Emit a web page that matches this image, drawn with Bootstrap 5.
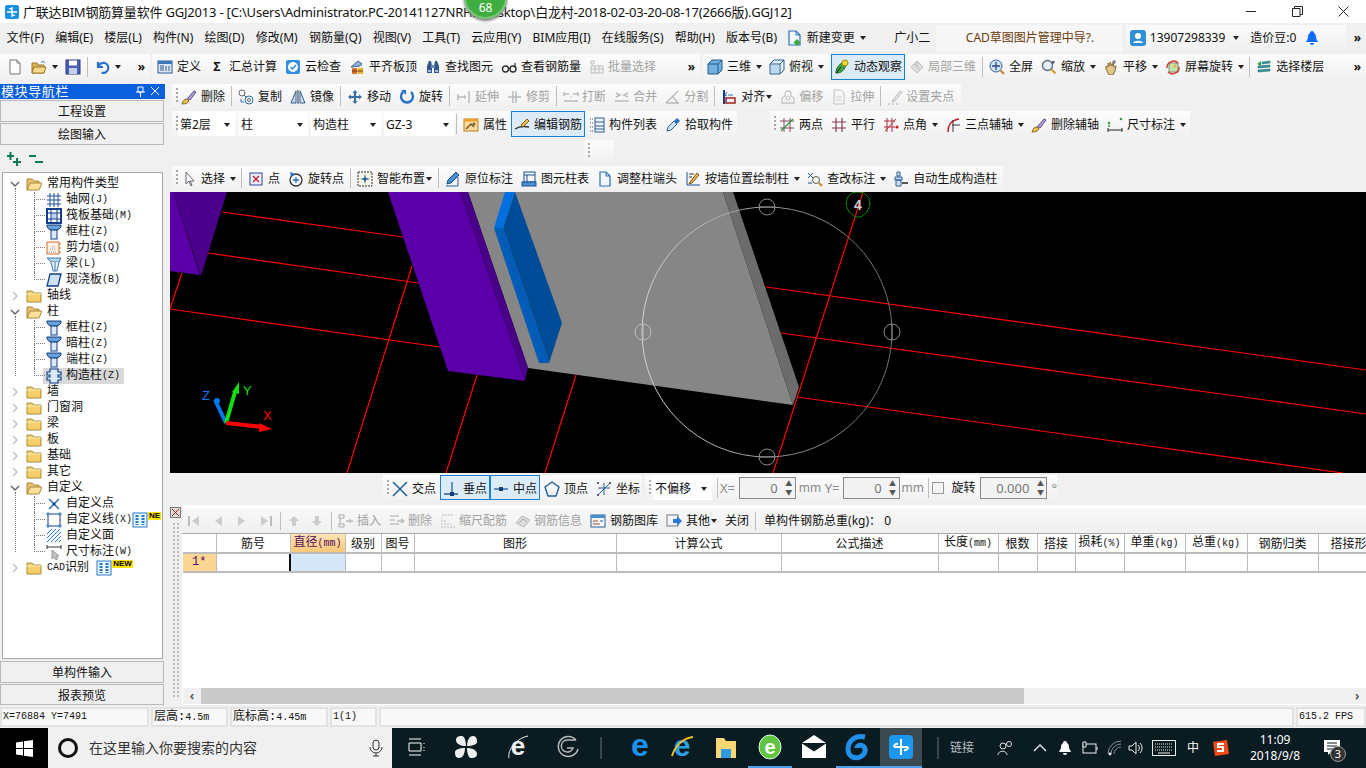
<!DOCTYPE html>
<html lang="zh-CN">
<head>
<meta charset="UTF-8">
<title>广联达BIM钢筋算量软件 GGJ2013</title>
<link href="https://cdn.jsdelivr.net/npm/bootstrap@5.3.3/dist/css/bootstrap.min.css" rel="stylesheet">
<style>
html, body { margin: 0; height: 768px; overflow: hidden; }
body { width: 1366px; background: #f0f0f0; color: #111; font: 12px/16px "Noto Sans", "Noto Sans CJK SC", sans-serif; }
.ic { width: 16px; height: 16px; flex: none; display: block; }
.lat { font-family: "Liberation Mono", monospace; font-size: 10px; }

/* title + menu */
.title-bar { height: 23px; background: #fff; padding-left: 4px; font-size: 13px; white-space: nowrap; position: relative; }
.title-bar .ic { margin-right: 3px; }
.title-txt { width: 800px; overflow: hidden; letter-spacing: -.2px; }
.win-btns { margin-left: auto; }
.win-btns span { width: 46px; display: flex; justify-content: center; }
.score-ball { position: absolute; left: 464px; top: -24px; width: 43px; height: 43px; border-radius: 50%; background: #3fae3f; border: 2px solid #79c879; box-shadow: 0 2px 3px #777; color: #fff; text-align: center; padding-top: 23px; font-size: 12px; line-height: 14px; }
.menu-bar { height: 29px; padding-top: 1px; padding-left: 1px; white-space: nowrap; }
.mn { padding: 0 5.6px; }
.mn-aide { margin-left: 20px; }
.cad-tip { width: 186px; height: 26px; background: #f7f7f7; color: #6b3b0c; padding-left: 30px; line-height: 26px; font-size: 12px; }
.user-box { height: 26px; margin-left: 4px; width: 220px; background: linear-gradient(#fafafa, #f0f0f0); padding-left: 4px; }
.more { font-weight: 700; font-size: 12px; letter-spacing: -1px; }

/* toolbars */
.tbar-row { display: flex; padding-left: 2px; }
.tblock { display: flex; align-items: center; white-space: nowrap; background: linear-gradient(#fcfcfc, #f1f1f1); }
.tbtn { display: inline-flex; align-items: center; gap: 4px; padding: 0 4px; height: 100%; }
.tbtn.off { color: #a2a2a2; gap: 3px; }
.tbtn.on { border: 1px solid #1c7fd6; background: #dcebf8; padding: 0 2px; }
.dn { width: 0; height: 0; border: 3.5px solid transparent; border-top: 4px solid #222; border-bottom: 0; margin: 0 -1px 0 1px; flex: none; }
.dn-tight { margin-left: -3px; margin-right: 0; }
.tsep { width: 1px; height: 20px; background: #bdbdbd; margin: 0 2px; flex: none; }
.grip { width: 2px; height: 16px; margin: 0 -1px 0 4px; flex: none; background: repeating-linear-gradient(#aaa 0 2px, transparent 2px 4px); }
.combo { height: 24px; background: #fff; display: flex; align-items: center; padding-left: 2px; margin-right: 3px; }
.combo .dn { margin-left: auto; margin-right: 5px; }
.w-floor { width: 57px; margin-left: 1px; margin-right: 4px; } .w-kind { width: 69px; } .w-sub { width: 70px; } .w-name { width: 70px; margin-right: 0; }
.w-off { width: 59px; margin-left: 3px; }
.row-top { height: 26px; margin-top: 2px; padding-left: 0; }
.b-a { width: 150px; padding-left: 3px; margin-right: 2px; } .b-b { width: 548px; padding-left: 1px; margin-right: 3px; } .b-c { flex: 1; }
.more-at { margin-left: auto; margin-right: 6px; }
.r2 .tbtn, .r3 .tbtn, .r5 .tbtn, .r-snap .tbtn, .r3 .combo, .r-snap .combo { padding-top: 2px; }

.work { height: 621px; margin-top: 4px; }
.nav-pane { width: 165px; margin-right: 5px; flex: none; background: #f0f0f0; }
.nav-head { height: 15px; background: #0a5fdc; color: #fff; font-size: 13px; line-height: 15px; letter-spacing: .6px; padding: 0 0 0 1px; }
.nav-tab { display: block; width: 164px; height: 22px; margin-bottom: 1px; padding: 1px 0 0; border: 1px solid #b9b9b9; border-radius: 0; background: #f0f0f0; font-size: 12px; line-height: 20px; color: #111; }
.nav-tab:first-of-type { margin-top: 1px; }
.nav-tab:last-child { height: 21px; margin-bottom: 0; }
.tree-tools { height: 26px; padding-left: 6px; gap: 6px; }
.tree-box { height: 487px; width: 161px; margin-left: 2px; margin-bottom: 2px; background: #fff; border: 1px solid #a8a8a8; padding-top: 3px; overflow: hidden; }
.tree-row { height: 16px; display: flex; align-items: center; position: relative; white-space: nowrap; font-family: "Liberation Mono", "Noto Sans CJK SC", monospace; }
.tree-top { padding-left: 6px; }
.tree-top .chev { width: 12px; height: 12px; margin-right: 5px; }
.tree-top .fld { margin-right: 5px; }
.tree-group { position: relative; }
.tree-group.open::before { content: ""; position: absolute; left: 12px; top: 12px; bottom: 8px; border-left: 1px dotted #777; }
.tree-kids { margin-left: 31px; }
.tree-kid { padding-left: 12px; }
.tree-kid::before { content: ""; position: absolute; left: 0; top: 0; width: 11px; height: 8px; border-left: 1px dotted #777; border-bottom: 1px dotted #777; }
.tree-kid::after { content: ""; position: absolute; left: 0; top: 8px; height: 8px; border-left: 1px dotted #777; }
.tree-kid:last-child::after { display: none; }
.tree-kid .ic { margin-right: 4px; }
.tree-kid .ic-flat { margin-right: 0; }
.tree-sel { background: #d9d9d9; width: 81px; display: inline-flex; align-items: center; margin-left: -3px; padding-left: 3px; height: 16px; }
.new-tag { color: #000; background: #ffe600; font: 700 8px/8px "Liberation Sans", sans-serif; padding: 0 1px; align-self: flex-start; }

.work-main { width: 1196px; }
.r2 { height: 24px; } .r3 { height: 26px; margin-top: 3px; }
.r4 { height: 21px; margin: 3px 0 0 414px; padding-left: 0; }
.r5 { height: 24px; margin-top: 5px; }
.r-snap { height: 25px; margin: 2px 0 0 213px; padding-left: 0; }
.b-r2 { width: 789px; } .b-r3a { width: 565px; } .b-r3b { width: 420px; margin-left: 33px; } .b-r4 { width: 30px; } .b-r5 { width: 831px; }
.b-s1 { width: 259px; } .b-s2 { width: 412px; margin-left: 3px; }
.canvas-3d { display: block; width: 1196px; height: 281px; margin-top: 2px; background: #000; }
.spin { height: 22px; border: 1px solid #888; background: #f3f3f3; display: flex; align-items: center; justify-content: flex-end; color: #777; font-size: 13px; }
.spin-a { width: 57px; } .spin-b { width: 68px; }
.spin i { display: block; width: 12px; margin-left: 5px; text-align: center; font-style: normal; font-size: 7px; line-height: 9px; color: #555; }
.mute { color: #8a8a8a; font-size: 13px; }
.chk-box { width: 12px; height: 12px; border: 1px solid #999; background: #f5f5f5; flex: none; }
.x-lbl { width: 19px; } .y-lbl { width: 18px; margin-left: 4px; }
.mm-a { width: 22px; margin-left: 3px; font-size: 12px; } .mm-b { width: 23px; margin-left: 2px; font-size: 12px; }
.rot-lbl { margin: 0 4px 0 8px; } .sep-s { margin: 0 3px 0 3px; }

.rebar-pane { height: 200px; margin-top: 5px; }
.side-strip { width: 12px; flex: none; padding-top: 2px; background: #f0f0f0; }
.dots { height: 175px; margin: 4px 2px 0; background-image: radial-gradient(#bbb 1px, transparent 1px); background-size: 4px 4px; }
.rebar-body { width: 1184px; background: #fff; }
.rebar-tools { height: 25px; margin-top: 3px; background: linear-gradient(#f8f8f8, #f0f0f0); white-space: nowrap; }
.rebar-tools .tbtn { height: 22px; }
.rebar-tools .tsep { height: 18px; }
.rebar-tools .nudge { padding: 0 3px; }
.tbtn-sum { margin-left: 2px; }
.rebar-grid { flex: 1; background: #fff; border-top: 1px solid #a8a8a8; padding-left: 1px; overflow: hidden; }
.grid-tbl { table-layout: fixed; width: 1183px; margin: 0; border-collapse: collapse; font-size: 12px; }
.grid-tbl th, .grid-tbl td { height: 19px; padding: 0; border: solid #bcbcbc; border-width: 0 1px 2px 0; text-align: center; font-weight: 400; line-height: 16px; white-space: nowrap; overflow: hidden; background: #fff; color: #111; }
.grid-tbl .act-h { background: linear-gradient(#fde4b5, #f8c878); color: #5a0a5a; }
.grid-tbl .act-r { background: #fbd592; color: #5a0a5a; font-family: "Liberation Mono", monospace; }
.grid-tbl .act-c { background: #d6e8f8; border-left: 2px solid #111; }
.grid-tbl .clip { text-align: left; padding-left: 12px; }
.c1{width:33px}.c2{width:74px}.c3{width:55px}.c4{width:36px}.c5{width:33px}.c6{width:202px}.c7{width:165px}.c8{width:157px}
.c9{width:60px}.c10{width:39px}.c11{width:38px}.c12{width:49px}.c13{width:61px}.c14{width:62px}.c15{width:71px}.c16{width:48px}
.hbar { height: 16px; margin: 0 0 1px 1px; background: #f0f0f0; }
.hbar-arrow { width: 18px; text-align: center; color: #555; font-weight: 700; line-height: 15px; }
.hbar-thumb { width: 823px; background: #c9c9c9; }
.hbar-end { width: 11px; margin-left: auto; color: #555; font-weight: 700; line-height: 15px; }

.status-bar { height: 20px; margin-top: 2px; gap: 2px; font-size: 12px; }
.st { background: #f8f8f8; border: 2px solid #e2e2e2; line-height: 16px; padding-left: 1px; white-space: nowrap; font-family: "Liberation Mono", "Noto Sans CJK SC", monospace; overflow: hidden; }
.st-xy { width: 149px; } .st-h { width: 77px; } .st-b { width: 98px; } .st-n { width: 47px; } .st-fill { flex: 1; } .st-fps { width: 70px; }
.st-sm { font-size: 10px; }

.task-bar { height: 40px; margin-top: 1px; background: #0a1b22; color: #fff; position: relative; white-space: nowrap; }
.start-cell { width: 48px; height: 40px; background: #000; justify-content: center; }
.search-cell { width: 344px; height: 40px; background: #f0f0f0; color: #333; font-size: 14px; padding-left: 9px; gap: 10px; }
.task-ic { width: 44px; height: 40px; display: flex; align-items: center; justify-content: center; border-bottom: 2px solid transparent; flex: none; }
.task-ic svg { width: 26px; height: 26px; display: block; overflow: visible; }
.task-ic.used { border-bottom-color: #4aa3e8; }
.task-ic.now { background: #3b4a51; border-bottom-color: #4aa3e8; width: 42px; }
.task-sep { width: 2px; height: 22px; background: #3a474d; flex: none; }
.tray { font-size: 12px; }
.tray-link { color: #b8c0c4; }
.clock { text-align: center; width: 70px; line-height: 16px; }
.note-badge { left: 7px; top: 8px; width: 16px; height: 16px; background: #333; border: 1px solid #999; font-size: 11px; line-height: 14px; }
.note-wrap { margin-left: auto; margin-right: 23px; }
.ml-n2 { margin-left: -2px; } .ml2 { margin-left: 2px; } .ml5 { margin-left: 5px; } .ml6 { margin-left: 6px; } .ml7 { margin-left: 7px; } .ml8 { margin-left: 8px; }
.ml9 { margin-left: 9px; } .ml10 { margin-left: 10px; } .ml11 { margin-left: 11px; } .ml12 { margin-left: 12px; } .ml15 { margin-left: 15px; } .ml16 { margin-left: 16px; } .ml20 { margin-left: 20px; } .ml23 { margin-left: 23px; }
</style>
</head>
<body>

<!-- icons -->
<svg width="0" height="0" class="position-absolute">
<defs>
<symbol id="i-app" viewBox="0 0 16 16"><rect x="1" y="1" width="14" height="14" rx="2" fill="#1b8fe0"/><path d="M8 3v10M3 8h10M5 5a2 2 0 0 1 3 1M11 11a2 2 0 0 1-3-1" stroke="#fff" stroke-width="1.3" fill="none"/></symbol>
<symbol id="i-new" viewBox="0 0 16 16"><path d="M3 1h7l3 3v11H3z" fill="#fff" stroke="#777"/><path d="M10 1v3h3" fill="#ddd" stroke="#777"/></symbol>
<symbol id="i-open" viewBox="0 0 16 16"><path d="M1 4h5l1 2h6v8H1z" fill="#e0b25a" stroke="#9a7a30"/><path d="M3 8h12l-2 6H1z" fill="#f8d88a" stroke="#9a7a30"/><path d="M10 3a3 3 0 0 1 4 1" stroke="#3a7ad0" fill="none"/></symbol>
<symbol id="i-save" viewBox="0 0 16 16"><rect x="1" y="1" width="14" height="14" fill="#4a5fb5" stroke="#2a3a80"/><rect x="4" y="1.500" width="8" height="5" fill="#fff"/><rect x="4" y="9" width="8" height="6" fill="#c8d0e8"/></symbol>
<symbol id="i-undo" viewBox="0 0 16 16"><path d="M4 3v5h5M4.500 7.500a5 5 0 1 1 3 6" fill="none" stroke="#2a70c8" stroke-width="2.200"/></symbol>
<symbol id="i-chg" viewBox="0 0 16 16"><path d="M2 1h7l4 4v10H2z" fill="#f2f7fc" stroke="#2a70b8" stroke-width="1.200"/><path d="M9 1v4h4" fill="none" stroke="#2a70b8"/><path d="M10 9l3.500 3.500L10 16l-3.500-3.500z" fill="#3fa53f"/></symbol>
<symbol id="i-def" viewBox="0 0 16 16"><rect x="1" y="2" width="14" height="12" fill="#dce8f5" stroke="#2a5a95"/><rect x="1" y="2" width="14" height="3" fill="#3a78b8"/><path d="M3 7h4M3 9h4M3 11h4M9 7v5M12 7v5" stroke="#2a5a95"/></symbol>
<symbol id="i-cloud" viewBox="0 0 16 16"><rect x="1" y="1" width="14" height="14" rx="2" fill="#2f8fe0"/><circle cx="8" cy="8" r="5" fill="#fff"/><path d="M5.500 8l2 2 3.500-4" stroke="#2f8fe0" stroke-width="1.500" fill="none"/></symbol>
<symbol id="i-flush" viewBox="0 0 16 16"><path d="M2 8l7-6 4 3-2 2z" fill="#8fb4da" stroke="#40688f"/><rect x="3" y="9" width="5" height="6" fill="#d9702a"/><rect x="9" y="9" width="5" height="6" fill="#e8b52a"/><path d="M3 12h11" stroke="#7a3a10"/></symbol>
<symbol id="i-binoc" viewBox="0 0 16 16"><path d="M2 14V7l2-5h2l1 5v7zM9 14V7l1-5h2l2 5v7z" fill="#33578a"/><rect x="6" y="6" width="4" height="3" fill="#6a8ab5"/><rect x="3" y="11" width="3" height="2" fill="#a8c0e0"/><rect x="10" y="11" width="3" height="2" fill="#a8c0e0"/></symbol>
<symbol id="i-glass" viewBox="0 0 16 16"><circle cx="4.500" cy="10" r="3" fill="none" stroke="#333" stroke-width="1.400"/><circle cx="12" cy="10" r="3" fill="none" stroke="#333" stroke-width="1.400"/><path d="M7 9.500h2.500M14 9V4" stroke="#333" stroke-width="1.200"/></symbol>
<symbol id="i-batch" viewBox="0 0 16 16"><path d="M2 2h3v3H2zM2 7h12v7H2zM6 7v7M10 7v7M2 10h12" fill="none" stroke="#bbb"/></symbol>
<symbol id="i-cube" viewBox="0 0 16 16"><path d="M1 5l4-4h10v10l-4 4H1z" fill="#6fb0df" stroke="#235a8a"/><path d="M1 5h10v10M11 5l4-4" fill="none" stroke="#235a8a"/></symbol>
<symbol id="i-top" viewBox="0 0 16 16"><path d="M1 5l4-4h10v10l-4 4H1z" fill="#e6f1fa" stroke="#235a8a"/><path d="M1 5h10v10M11 5l4-4" fill="none" stroke="#235a8a"/><path d="M5 1l-4 4" stroke="#235a8a"/><path d="M2 6h8v8H2z" fill="#bcd9f0"/></symbol>
<symbol id="i-orbit" viewBox="0 0 16 16"><path d="M2 14c0-6 4-10 11-12-1 7-4 11-9 12z" fill="#3fa53f" stroke="#1d6b1d"/><circle cx="11" cy="4" r="3" fill="#f2da3a" stroke="#9a8a10"/><path d="M2 14l5-6" stroke="#114"/></symbol>
<symbol id="i-local" viewBox="0 0 16 16"><path d="M2 8l6-6 6 6-6 6z" fill="#dedede" stroke="#bbb"/><path d="M5 5l6 6M8 2v6" stroke="#bbb"/></symbol>
<symbol id="i-full" viewBox="0 0 16 16"><circle cx="7" cy="7" r="6" fill="#cfe2f5" stroke="#3a5f95"/><path d="M7 3v8M3 7h8" stroke="#2a4a80" stroke-width="1.300"/><path d="M11.500 11.500L15 15" stroke="#c08a30" stroke-width="2"/></symbol>
<symbol id="i-zoom" viewBox="0 0 16 16"><circle cx="6.500" cy="6.500" r="5" fill="#e6eef8" stroke="#5a6a80" stroke-width="1.300"/><path d="M10.500 10.500l4 4" stroke="#d09a30" stroke-width="2.200"/><path d="M12 2v3M11 3h3" stroke="#335"/></symbol>
<symbol id="i-pan" viewBox="0 0 16 16"><path d="M3 10V7l2 1V4l2 3V3l2 4 1-3 1 4 2-1-1 5-2 4H6z" fill="#e3c48a" stroke="#8a6a30"/><path d="M11 1v4M9 3h4" stroke="#556"/></symbol>
<symbol id="i-spin" viewBox="0 0 16 16"><rect x="4" y="4" width="9" height="9" fill="#bfe3a8" stroke="#888"/><path d="M2 9a6.500 6.500 0 0 1 11-5M14 8a6.500 6.500 0 0 1-11 5" fill="none" stroke="#d8332a" stroke-width="1.400"/><circle cx="10" cy="7" r="1.500" fill="#e8b52a"/></symbol>
<symbol id="i-floor" viewBox="0 0 16 16"><path d="M6 3l8-1v2l-8 1zM2 7l12-1v2L2 9zM2 11l12-1v2l-12 1z" fill="#2f8fae" stroke="#1f6a50" stroke-width=".5"/><path d="M5 2L1 5l4 2z" fill="#2fa04a"/></symbol>
<symbol id="i-del" viewBox="0 0 16 16"><path d="M1 15c1-3 2-5 5-5l2 2c-1 2-3 3-7 3z" fill="#e8c24a" stroke="#8a6a20"/><path d="M6.500 9.500L13 2l2 1-6 8z" fill="#b7a5d8" stroke="#5a4a88"/></symbol>
<symbol id="i-copy" viewBox="0 0 16 16"><circle cx="4" cy="4" r="3" fill="none" stroke="#666"/><circle cx="11" cy="11" r="4" fill="none" stroke="#2a70b8"/><path d="M6 6l3 3M3 10v3h3" stroke="#2a70b8" fill="none"/><circle cx="11" cy="11" r="1.500" fill="none" stroke="#666"/></symbol>
<symbol id="i-mirror" viewBox="0 0 16 16"><path d="M6 2L1 14h5zM10 2l5 12h-5z" fill="#cfe0f2" stroke="#2f5f95"/><path d="M8 1v14" stroke="#333"/></symbol>
<symbol id="i-move" viewBox="0 0 16 16"><path d="M8 1l2.500 3H9v3h3V5.500L15 8l-3 2.500V9H9v3h1.500L8 15l-2.500-3H7V9H4v1.500L1 8l3-2.500V7h3V4H5.500z" fill="#3a6fa5"/></symbol>
<symbol id="i-rot" viewBox="0 0 16 16"><path d="M4 3a6 6 0 1 0 8 0" fill="none" stroke="#2a6fc8" stroke-width="2.400"/><path d="M2 1h5v5z" fill="#2a6fc8"/></symbol>
<symbol id="i-ext" viewBox="0 0 16 16"><path d="M1 8h9M13 2v12M2 5v6" fill="none" stroke="#bbb" stroke-width="1.500"/><path d="M8 6l2 2-2 2" stroke="#bbb" fill="none"/></symbol>
<symbol id="i-trim" viewBox="0 0 16 16"><path d="M1 8h13M6 2v12M9 2v12" fill="none" stroke="#bbb" stroke-width="1.500"/></symbol>
<symbol id="i-brk" viewBox="0 0 16 16"><path d="M1 5h5M10 5h5M1 12h14M1 3v4M15 3v4" fill="none" stroke="#bbb" stroke-width="1.500"/><path d="M7 8h2" stroke="#ccc"/></symbol>
<symbol id="i-mrg" viewBox="0 0 16 16"><path d="M2 4l4 2-4 2M14 4l-4 2 4 2M1 12h14" fill="none" stroke="#bbb" stroke-width="1.500"/></symbol>
<symbol id="i-split" viewBox="0 0 16 16"><path d="M1 14L13 2M1 14h13M8 8l5 6" fill="none" stroke="#bbb" stroke-width="1.400"/></symbol>
<symbol id="i-align" viewBox="0 0 16 16"><path d="M3 1v14" stroke="#1b3a8a" stroke-width="2"/><rect x="5" y="9" width="9" height="5" fill="none" stroke="#a02020" stroke-width="1.500"/><path d="M7 6h5M6 3l-2 3 2 1" stroke="#2a70b8" fill="none"/></symbol>
<symbol id="i-off" viewBox="0 0 16 16"><path d="M2 14V9l3-2V5a3 3 0 0 1 6 0v2l3 2v5z" fill="none" stroke="#c4c4c4" stroke-width="1.300"/><circle cx="8" cy="9" r="2" fill="none" stroke="#c4c4c4"/></symbol>
<symbol id="i-str" viewBox="0 0 16 16"><path d="M3 1h7l3 3v11H3z" fill="#f6f6f6" stroke="#c0c0c0"/><path d="M5 8h6M5 11h6" stroke="#ccc"/></symbol>
<symbol id="i-grp" viewBox="0 0 16 16"><path d="M6 11l7-9 2 1-7 9-3 1z" fill="#e6e6e6" stroke="#bbb"/><path d="M1 15h2M5 15h2M9 15h2" stroke="#aaa"/></symbol>
<symbol id="i-prop" viewBox="0 0 16 16"><rect x="1" y="2" width="14" height="12" fill="#f9d9a0" stroke="#b87a20"/><rect x="1" y="2" width="14" height="2.500" fill="#f0a030"/><path d="M3 12l5-5 3 3" stroke="#7a5a20" fill="none" stroke-width="1.500"/><circle cx="11" cy="7" r="1.500" fill="#7a5a20"/></symbol>
<symbol id="i-edit" viewBox="0 0 16 16"><path d="M1 12c3-2 8-3 14-2" stroke="#333" stroke-width="1.500" fill="none"/><path d="M7 8l6-6 2 2-6 6z" fill="#e8c24a" stroke="#7a5a20"/></symbol>
<symbol id="i-list" viewBox="0 0 16 16"><rect x="6" y="1" width="9" height="14" fill="#eef4fa" stroke="#2f5f95"/><path d="M6 5h9M6 9h9M6 12h9" stroke="#2f5f95"/><path d="M1 2h3M1 6h3M1 10h3M1 14h3" stroke="#555" stroke-dasharray="1 1"/></symbol>
<symbol id="i-pick" viewBox="0 0 16 16"><path d="M2 14l1-4 6-6 3 3-6 6z" fill="#cfe2f5" stroke="#2a5f95"/><path d="M9 4l3-3 3 3-3 3z" fill="#2a70c8"/></symbol>
<symbol id="i-p2" viewBox="0 0 16 16"><path d="M1 4h14M1 11h14M5 1v14M11 1v14" stroke="#8a4a5a"/><path d="M2 14L14 2" stroke="#2a9a3a" stroke-width="1.300"/></symbol>
<symbol id="i-par" viewBox="0 0 16 16"><path d="M1 5h14M1 11h14M5 1v14M11 1v14" stroke="#8a3a5a" stroke-width="1.200"/></symbol>
<symbol id="i-ang" viewBox="0 0 16 16"><path d="M1 4h11M1 10h11M4 1v14M9 1v14M2 14L13 2" stroke="#b03040"/><circle cx="14" cy="10" r="1.600" fill="#d01a2a"/></symbol>
<symbol id="i-p3" viewBox="0 0 16 16"><path d="M3 15C3 7 7 3 14 2" fill="none" stroke="#d01a2a" stroke-width="1.400"/><path d="M7 8h8M8 3v12" stroke="#334"/></symbol>
<symbol id="i-dim" viewBox="0 0 16 16"><path d="M1 13h14M1 11v4M15 11v4" stroke="#222"/><circle cx="2" cy="6" r="1.300" fill="#3a9a4a"/><circle cx="14" cy="2" r="1.300" fill="#3a9a4a"/><circle cx="2" cy="9" r="1" fill="#3a9a4a"/></symbol>
<symbol id="i-cur" viewBox="0 0 16 16"><path d="M5 1v12l3-3 2 5 1-1-2-4h4z" fill="#fff" stroke="#667"/></symbol>
<symbol id="i-pt" viewBox="0 0 16 16"><rect x="2" y="2" width="12" height="12" fill="#eef" stroke="#2a4a88"/><path d="M5 5l6 6M11 5l-6 6" stroke="#c02030" stroke-width="1.400"/></symbol>
<symbol id="i-rpt" viewBox="0 0 16 16"><circle cx="8" cy="9" r="6" fill="none" stroke="#333" stroke-width="1.300"/><path d="M8 6v6M5 9h6" stroke="#2a70b8" stroke-width="1.300"/><path d="M2 1l1 5 4-3z" fill="#2a70c8"/></symbol>
<symbol id="i-smart" viewBox="0 0 16 16"><rect x="1" y="1" width="14" height="14" fill="#f4f4e4" stroke="#333" stroke-dasharray="2 1"/><path d="M8 3l1 4 4 1-4 1-1 4-1-4-4-1 4-1z" fill="#2a5f95"/></symbol>
<symbol id="i-orig" viewBox="0 0 16 16"><path d="M1 15h12V6" fill="none" stroke="#2a5f95"/><path d="M2 13l1-4 8-8 3 3-8 8z" fill="#4a8fd0" stroke="#1d4f85"/></symbol>
<symbol id="i-tbl" viewBox="0 0 16 16"><rect x="3" y="1" width="11" height="10" fill="#f4f8fc" stroke="#1d4f95"/><path d="M3 4h11M6 4v7" stroke="#1d4f95"/><rect x="1" y="11" width="14" height="4" fill="#4a8fd0" stroke="#1d4f95"/></symbol>
<symbol id="i-adj" viewBox="0 0 16 16"><path d="M3 1h6l4 4v10H3z" fill="#f2f7fc" stroke="#2a70b8" stroke-width="1.200"/><path d="M9 1v4h4" fill="none" stroke="#2a70b8"/></symbol>
<symbol id="i-wall" viewBox="0 0 16 16"><path d="M2 1v13h13" stroke="#1d4f95" fill="none"/><path d="M5 11l7-9 2 2-7 8-3 1z" fill="#e6b04a" stroke="#7a5a20"/><path d="M4 3h5M4 6h3" stroke="#333"/></symbol>
<symbol id="i-chk" viewBox="0 0 16 16"><path d="M1 2l5 5M6 2L1 7M1 12h4" stroke="#1d4f95"/><circle cx="9" cy="9" r="3.500" fill="#f6f6e4" stroke="#5a5a5a"/><path d="M12 12l3 3" stroke="#c8862a" stroke-width="2"/></symbol>
<symbol id="i-auto" viewBox="0 0 16 16"><path d="M4 1h3v4H4zM2 6h7v3H2zM3 9h5v6H3z" fill="#cfe2f5" stroke="#2a5f95"/><path d="M9 12h6" stroke="#555" stroke-width="2"/></symbol>
<symbol id="i-sx" viewBox="0 0 16 16"><path d="M1 1l14 14M15 1L1 15" stroke="#1d5f9f" stroke-width="1.500"/></symbol>
<symbol id="i-sp" viewBox="0 0 16 16"><path d="M9 1v12M1 13h14" stroke="#1d5f9f" stroke-width="1.300"/><rect x="7" y="11" width="4" height="4" fill="#1b3a78"/></symbol>
<symbol id="i-sm" viewBox="0 0 16 16"><path d="M1 8h14" stroke="#1d5f9f" stroke-width="1.300"/><rect x="6" y="6" width="4" height="4" fill="#1b3a78"/></symbol>
<symbol id="i-sv" viewBox="0 0 16 16"><path d="M8 1l7 5-3 9H4L1 6z" fill="none" stroke="#1d5f9f" stroke-width="1.400"/></symbol>
<symbol id="i-sc" viewBox="0 0 16 16"><path d="M2 7h12M8 2v12M2 14L14 2" stroke="#1d5f9f" fill="none"/><circle cx="2" cy="2" r="1" fill="#334"/><circle cx="14" cy="2" r="1" fill="#334"/><circle cx="2" cy="14" r="1" fill="#334"/></symbol>
<symbol id="i-ins" viewBox="0 0 16 16"><path d="M1 2h5v3H1zM1 11h5v3H1zM2 5v6" fill="none" stroke="#aaa"/><path d="M8 8h7M12 6v4" stroke="#bbb" stroke-width="1.300"/></symbol>
<symbol id="i-rem" viewBox="0 0 16 16"><path d="M1 3h9M1 7h5M1 11h9" stroke="#aaa"/><path d="M8 8h7M12 6l3 2-3 2" fill="none" stroke="#bbb" stroke-width="1.300"/></symbol>
<symbol id="i-scale" viewBox="0 0 16 16"><path d="M2 15V5M5 15V7M8 15V9M11 15v-4M14 15v-2M2 2h12" stroke="#bbb" stroke-dasharray="2 1"/></symbol>
<symbol id="i-info" viewBox="0 0 16 16"><path d="M1 10l6-7 8 4-6 7z" fill="#ddd" stroke="#bbb"/><path d="M4 10l4-4 4 3" stroke="#aaa" fill="none"/></symbol>
<symbol id="i-lib" viewBox="0 0 16 16"><rect x="1" y="2" width="14" height="12" fill="#f3f7fb" stroke="#2a5f95"/><rect x="1" y="2" width="14" height="3" fill="#4a8fd0"/><path d="M3 8h5M3 11h7" stroke="#a05020"/><path d="M10 8h3" stroke="#2a5f95"/></symbol>
<symbol id="i-oth" viewBox="0 0 16 16"><rect x="1" y="2" width="11" height="11" fill="#f2f6fa" stroke="#778"/><path d="M7 6h4V3l5 5-5 5v-3H7z" fill="#2a78d8"/></symbol>
<symbol id="i-plus2" viewBox="0 0 16 16"><path d="M1 5h7M4.500 1v8M7 11h8M11 7v8" stroke="#0a7a58" stroke-width="2"/></symbol>
<symbol id="i-min2" viewBox="0 0 16 16"><path d="M1 5h7M7 11h8" stroke="#0a7a58" stroke-width="2"/></symbol>
<symbol id="i-chv" viewBox="0 0 12 12"><path d="M2 4l4 4 4-4" fill="none" stroke="#666" stroke-width="1.500"/></symbol>
<symbol id="i-chr" viewBox="0 0 12 12"><path d="M4 2l4 4-4 4" fill="none" stroke="#c0c0c0" stroke-width="1.500"/></symbol>
<symbol id="i-fd" viewBox="0 0 16 16"><path d="M1 3h5l2 2h7v9H1z" fill="#f7cf6a" stroke="#aa8a3a"/><path d="M1 6h14" stroke="#fff3c0"/></symbol>
<symbol id="i-fo" viewBox="0 0 16 16"><path d="M1 3h5l2 2h5v3H4l-3 6z" fill="#e6c070" stroke="#aa8a3a"/><path d="M4 7h12l-3 7H1z" fill="#fbe09a" stroke="#aa8a3a"/></symbol>
<symbol id="i-tgrid" viewBox="0 0 16 16"><path d="M1 4h14M1 8h14M1 12h14M4 1v14M8 1v14M12 1v14" stroke="#1d4fa5"/></symbol>
<symbol id="i-traft" viewBox="0 0 16 16"><rect x="1" y="1" width="14" height="14" fill="#fff" stroke="#123f88" stroke-width="2"/><rect x="5" y="5" width="6" height="6" fill="#bcd4f0" stroke="#123f88"/><path d="M1 5h4M1 11h4M11 5h4M11 11h4M5 1v4M11 1v4M5 11v4M11 11v4" stroke="#123f88"/></symbol>
<symbol id="i-tcol" viewBox="0 0 16 16"><path d="M1 1h14v2l-3 3H4L1 3z" fill="#6a9fd8" stroke="#123f88"/><rect x="5" y="6" width="6" height="9" fill="#dce9f8" stroke="#123f88"/></symbol>
<symbol id="i-twall" viewBox="0 0 16 16"><rect x="1" y="2" width="12" height="12" fill="#f8f0e6" stroke="#d0702a"/><path d="M3 12h8M4 9h6M6 7h3" stroke="#999" stroke-dasharray="1 1"/><path d="M13 4h2M13 8h2M13 12h2" stroke="#d0702a"/></symbol>
<symbol id="i-tbeam" viewBox="0 0 16 16"><path d="M1 2h14l-2 4H5z" fill="#b9d4ee" stroke="#3a78b8"/><path d="M5 6l2 9h4l2-9" fill="#e6f1fa" stroke="#3a78b8"/><path d="M9 6v9" stroke="#3a78b8"/></symbol>
<symbol id="i-tslab" viewBox="0 0 16 16"><path d="M4 2h11l-3 12H1z" fill="#cfe2f5" stroke="#123f88" stroke-width="1.300"/></symbol>
<symbol id="i-tcc" viewBox="0 0 16 16"><path d="M4 1h8v3h3v3h-3v2h3v3h-3v3H4v-3H1V9h3V7H1V4h3z" fill="#dce9f8" stroke="#123f88" stroke-width="1.200"/></symbol>
<symbol id="i-tpt" viewBox="0 0 16 16"><path d="M3 3l10 10M13 3L3 13" stroke="#2a70b8" stroke-width="1.500"/><circle cx="8" cy="8" r="1.500" fill="#123f88"/></symbol>
<symbol id="i-tln" viewBox="0 0 16 16"><rect x="2" y="2" width="12" height="12" fill="none" stroke="#123f88"/><path d="M1 1h2v2H1zM13 1h2v2h-2zM1 13h2v2H1zM13 13h2v2h-2z" fill="#fff" stroke="#2a70b8"/></symbol>
<symbol id="i-tfc" viewBox="0 0 16 16"><path d="M1 6l5-5M1 10l9-9M1 14L14 1M5 14l10-10M9 14l6-6M13 14l2-2" stroke="#2a78d8"/></symbol>
<symbol id="i-tdm" viewBox="0 0 16 16"><path d="M1 3h14M1 1v4M15 1v4" stroke="#333"/><path d="M6 6v9l2-2 2 3 2-1-2-3h3z" fill="#c4c4c4" stroke="#999"/></symbol>
<symbol id="i-cols" viewBox="0 0 16 16"><rect x="1" y="1" width="14" height="14" fill="#eaf4fd" stroke="#2a78c8"/><path d="M5 3v10M11 3v10" stroke="#2a78c8" stroke-width="3" stroke-dasharray="2 1"/></symbol>
<symbol id="i-bell" viewBox="0 0 16 16"><path d="M8 1a2 2 0 0 1 2 2c2 1 2 3 2 5l2 4H2l2-4c0-2 0-4 2-5a2 2 0 0 1 2-2zM6 13h4a2 2 0 0 1-4 0z" fill="currentColor"/></symbol>
</defs>
</svg>

<!-- title bar -->
<div class="title-bar d-flex align-items-center">
  <svg class="ic"><use href="#i-app"/></svg>
  <div class="title-txt">广联达BIM钢筋算量软件 GGJ2013 - [C:\Users\Administrator.PC-20141127NRHI\Desktop\白龙村-2018-02-03-20-08-17(2666版).GGJ12]</div>
  <div class="win-btns d-flex align-items-center">
    <span><svg width="11" height="11"><path d="M0 5.500h10" stroke="#222"/></svg></span>
    <span><svg width="11" height="11"><path d="M.5 2.500h7.500v8H.5zM2.500 2.500v-2h8v8H8" fill="none" stroke="#222"/></svg></span>
    <span><svg width="11" height="11"><path d="M.5.500l10 10M10.500.500l-10 10" stroke="#222"/></svg></span>
  </div>
  <div class="score-ball">68</div>
</div>

<!-- menu -->
<div class="menu-bar d-flex align-items-center">
  <span class="mn">文件(F)</span><span class="mn">编辑(E)</span><span class="mn">楼层(L)</span><span class="mn">构件(N)</span><span class="mn">绘图(D)</span><span class="mn">修改(M)</span><span class="mn">钢筋量(Q)</span><span class="mn">视图(V)</span><span class="mn">工具(T)</span><span class="mn">云应用(Y)</span><span class="mn">BIM应用(I)</span><span class="mn">在线服务(S)</span><span class="mn">帮助(H)</span><span class="mn">版本号(B)</span>
  <span class="tbtn"><svg class="ic"><use href="#i-chg"/></svg>新建变更<i class="dn"></i></span>
  <span class="mn mn-aide">广小二</span>
  <div class="cad-tip">CAD草图图片管理中导?.</div>
  <div class="user-box d-flex align-items-center">
    <svg class="ic"><rect x="0" y="0" width="16" height="16" rx="3" fill="#2f8fd8"/><circle cx="8" cy="6" r="3" fill="#fff"/><path d="M3 13c1-3 9-3 10 0z" fill="#fff"/></svg>
    <span class="ms-1">13907298339</span><i class="dn ms-2"></i><span class="ms-2 ps-1">造价豆:0</span>
    <svg class="ic text-primary ms-2"><use href="#i-bell"/></svg>
  </div>
  <span class="more more-at">»</span>
</div>

<!-- top toolbar -->
<div class="tbar-row row-top">
  <div class="tblock b-a">
    <span class="tbtn"><svg class="ic"><use href="#i-new"/></svg></span>
    <span class="tbtn"><svg class="ic"><use href="#i-open"/></svg><i class="dn"></i></span>
    <span class="tbtn"><svg class="ic"><use href="#i-save"/></svg></span>
    <i class="tsep"></i>
    <span class="tbtn"><svg class="ic"><use href="#i-undo"/></svg><i class="dn"></i></span>
    <span class="more more-at">»</span>
  </div>
  <div class="tblock b-b">
    <span class="tbtn"><svg class="ic"><use href="#i-def"/></svg>定义</span>
    <span class="tbtn"><b class="ic text-center">Σ</b>汇总计算</span>
    <span class="tbtn"><svg class="ic"><use href="#i-cloud"/></svg>云检查</span>
    <span class="tbtn"><svg class="ic"><use href="#i-flush"/></svg>平齐板顶</span>
    <span class="tbtn"><svg class="ic"><use href="#i-binoc"/></svg>查找图元</span>
    <span class="tbtn"><svg class="ic"><use href="#i-glass"/></svg>查看钢筋量</span>
    <span class="tbtn off"><svg class="ic"><use href="#i-batch"/></svg>批量选择</span>
    <span class="more more-at">»</span>
  </div>
  <div class="tblock b-c">
    <span class="tbtn"><svg class="ic"><use href="#i-cube"/></svg>三维<i class="dn"></i></span>
    <span class="tbtn"><svg class="ic"><use href="#i-top"/></svg>俯视<i class="dn"></i></span>
    <span class="tbtn on ms-1"><svg class="ic"><use href="#i-orbit"/></svg>动态观察</span>
    <span class="tbtn off"><svg class="ic"><use href="#i-local"/></svg>局部三维</span>
    <i class="tsep"></i>
    <span class="tbtn"><svg class="ic"><use href="#i-full"/></svg>全屏</span>
    <span class="tbtn"><svg class="ic"><use href="#i-zoom"/></svg>缩放<i class="dn"></i></span>
    <span class="tbtn"><svg class="ic"><use href="#i-pan"/></svg>平移<i class="dn"></i></span>
    <span class="tbtn"><svg class="ic"><use href="#i-spin"/></svg>屏幕旋转<i class="dn"></i></span>
    <i class="tsep"></i>
    <span class="tbtn"><svg class="ic"><use href="#i-floor"/></svg>选择楼层</span>
    <span class="more more-at">»</span>
  </div>
</div>

<div class="work d-flex">
  <!-- module nav -->
  <div class="nav-pane">
    <div class="nav-head d-flex align-items-center">模块导航栏
      <svg class="ms-auto" width="11" height="11"><path d="M3 1h5v5H3zM1 6h9M5.500 6v5" fill="none" stroke="#fff"/></svg>
      <svg class="mx-1" width="11" height="11"><path d="M1 1l8 8M9 1l-8 8" stroke="#fff"/></svg>
    </div>
    <button class="btn nav-tab" type="button">工程设置</button>
    <button class="btn nav-tab" type="button">绘图输入</button>
    <div class="tree-tools d-flex align-items-center">
      <svg class="ic"><use href="#i-plus2"/></svg><svg class="ic"><use href="#i-min2"/></svg>
    </div>
    <div class="tree-box">
      <div class="tree-group open">
        <div class="tree-row tree-top"><svg class="ic chev"><use href="#i-chv"/></svg><svg class="ic fld"><use href="#i-fo"/></svg>常用构件类型</div>
        <div class="tree-kids">
          <div class="tree-row tree-kid"><svg class="ic"><use href="#i-tgrid"/></svg>轴网<span class="lat">(J)</span></div>
          <div class="tree-row tree-kid"><svg class="ic"><use href="#i-traft"/></svg>筏板基础<span class="lat">(M)</span></div>
          <div class="tree-row tree-kid"><svg class="ic"><use href="#i-tcol"/></svg>框柱<span class="lat">(Z)</span></div>
          <div class="tree-row tree-kid"><svg class="ic"><use href="#i-twall"/></svg>剪力墙<span class="lat">(Q)</span></div>
          <div class="tree-row tree-kid"><svg class="ic"><use href="#i-tbeam"/></svg>梁<span class="lat">(L)</span></div>
          <div class="tree-row tree-kid"><svg class="ic"><use href="#i-tslab"/></svg>现浇板<span class="lat">(B)</span></div>
        </div>
      </div>
      <div class="tree-row tree-top"><svg class="ic chev"><use href="#i-chr"/></svg><svg class="ic fld"><use href="#i-fd"/></svg>轴线</div>
      <div class="tree-group open">
        <div class="tree-row tree-top"><svg class="ic chev"><use href="#i-chv"/></svg><svg class="ic fld"><use href="#i-fo"/></svg>柱</div>
        <div class="tree-kids">
          <div class="tree-row tree-kid"><svg class="ic"><use href="#i-tcol"/></svg>框柱<span class="lat">(Z)</span></div>
          <div class="tree-row tree-kid"><svg class="ic"><use href="#i-tcol"/></svg>暗柱<span class="lat">(Z)</span></div>
          <div class="tree-row tree-kid"><svg class="ic"><use href="#i-tcol"/></svg>端柱<span class="lat">(Z)</span></div>
          <div class="tree-row tree-kid"><span class="tree-sel"><svg class="ic"><use href="#i-tcc"/></svg>构造柱<span class="lat">(Z)</span></span></div>
        </div>
      </div>
      <div class="tree-row tree-top"><svg class="ic chev"><use href="#i-chr"/></svg><svg class="ic fld"><use href="#i-fd"/></svg>墙</div>
      <div class="tree-row tree-top"><svg class="ic chev"><use href="#i-chr"/></svg><svg class="ic fld"><use href="#i-fd"/></svg>门窗洞</div>
      <div class="tree-row tree-top"><svg class="ic chev"><use href="#i-chr"/></svg><svg class="ic fld"><use href="#i-fd"/></svg>梁</div>
      <div class="tree-row tree-top"><svg class="ic chev"><use href="#i-chr"/></svg><svg class="ic fld"><use href="#i-fd"/></svg>板</div>
      <div class="tree-row tree-top"><svg class="ic chev"><use href="#i-chr"/></svg><svg class="ic fld"><use href="#i-fd"/></svg>基础</div>
      <div class="tree-row tree-top"><svg class="ic chev"><use href="#i-chr"/></svg><svg class="ic fld"><use href="#i-fd"/></svg>其它</div>
      <div class="tree-group open">
        <div class="tree-row tree-top"><svg class="ic chev"><use href="#i-chv"/></svg><svg class="ic fld"><use href="#i-fo"/></svg>自定义</div>
        <div class="tree-kids">
          <div class="tree-row tree-kid"><svg class="ic"><use href="#i-tpt"/></svg>自定义点</div>
          <div class="tree-row tree-kid"><svg class="ic"><use href="#i-tln"/></svg>自定义线<span class="lat">(X)</span><svg class="ic ic-flat"><use href="#i-cols"/></svg><span class="new-tag">NE</span></div>
          <div class="tree-row tree-kid"><svg class="ic"><use href="#i-tfc"/></svg>自定义面</div>
          <div class="tree-row tree-kid"><svg class="ic"><use href="#i-tdm"/></svg>尺寸标注<span class="lat">(W)</span></div>
        </div>
      </div>
      <div class="tree-row tree-top"><svg class="ic chev"><use href="#i-chr"/></svg><svg class="ic fld"><use href="#i-fd"/></svg><span class="lat">CAD</span>识别&nbsp;<svg class="ic"><use href="#i-cols"/></svg><span class="new-tag">NEW</span></div>
    </div>
    <button class="btn nav-tab" type="button">单构件输入</button>
    <button class="btn nav-tab" type="button">报表预览</button>
  </div>

  <div class="work-main d-flex flex-column">
    <!-- edit toolbar -->
    <div class="tbar-row r2">
      <div class="tblock b-r2">
        <i class="grip"></i>
        <span class="tbtn"><svg class="ic"><use href="#i-del"/></svg>删除</span><i class="tsep"></i>
        <span class="tbtn"><svg class="ic"><use href="#i-copy"/></svg>复制</span>
        <span class="tbtn"><svg class="ic"><use href="#i-mirror"/></svg>镜像</span><i class="tsep"></i>
        <span class="tbtn"><svg class="ic"><use href="#i-move"/></svg>移动</span>
        <span class="tbtn"><svg class="ic"><use href="#i-rot"/></svg>旋转</span><i class="tsep"></i>
        <span class="tbtn off"><svg class="ic"><use href="#i-ext"/></svg>延伸</span>
        <span class="tbtn off"><svg class="ic"><use href="#i-trim"/></svg>修剪</span><i class="tsep"></i>
        <span class="tbtn off"><svg class="ic"><use href="#i-brk"/></svg>打断</span>
        <span class="tbtn off"><svg class="ic"><use href="#i-mrg"/></svg>合并</span>
        <span class="tbtn off"><svg class="ic"><use href="#i-split"/></svg>分割</span><i class="tsep"></i>
        <span class="tbtn"><svg class="ic"><use href="#i-align"/></svg>对齐<i class="dn dn-tight"></i></span>
        <span class="tbtn off"><svg class="ic"><use href="#i-off"/></svg>偏移</span>
        <span class="tbtn off"><svg class="ic"><use href="#i-str"/></svg>拉伸</span><i class="tsep"></i>
        <span class="tbtn off"><svg class="ic"><use href="#i-grp"/></svg>设置夹点</span>
      </div>
    </div>

    <!-- layer / component selectors -->
    <div class="tbar-row r3">
      <div class="tblock b-r3a">
        <i class="grip"></i>
        <div class="combo w-floor">第2层<i class="dn"></i></div>
        <div class="combo w-kind">柱<i class="dn"></i></div>
        <div class="combo w-sub">构造柱<i class="dn"></i></div>
        <div class="combo w-name">GZ-3<i class="dn"></i></div>
        <i class="tsep"></i>
        <span class="tbtn"><svg class="ic"><use href="#i-prop"/></svg>属性</span>
        <span class="tbtn on"><svg class="ic"><use href="#i-edit"/></svg>编辑钢筋</span>
        <span class="tbtn"><svg class="ic"><use href="#i-list"/></svg>构件列表</span>
        <span class="tbtn"><svg class="ic"><use href="#i-pick"/></svg>拾取构件</span>
      </div>
      <div class="tblock b-r3b">
        <i class="grip"></i>
        <span class="tbtn"><svg class="ic"><use href="#i-p2"/></svg>两点</span>
        <span class="tbtn"><svg class="ic"><use href="#i-par"/></svg>平行</span>
        <span class="tbtn"><svg class="ic"><use href="#i-ang"/></svg>点角<i class="dn"></i></span>
        <span class="tbtn"><svg class="ic"><use href="#i-p3"/></svg>三点辅轴<i class="dn"></i></span>
        <span class="tbtn"><svg class="ic"><use href="#i-del"/></svg>删除辅轴</span>
        <span class="tbtn"><svg class="ic"><use href="#i-dim"/></svg>尺寸标注<i class="dn"></i></span>
      </div>
    </div>

    <div class="tbar-row r4"><div class="tblock b-r4"><i class="grip"></i></div></div>

    <!-- drawing toolbar -->
    <div class="tbar-row r5">
      <div class="tblock b-r5">
        <i class="grip"></i>
        <span class="tbtn"><svg class="ic"><use href="#i-cur"/></svg>选择<i class="dn"></i></span><i class="tsep"></i>
        <span class="tbtn"><svg class="ic"><use href="#i-pt"/></svg>点</span>
        <span class="tbtn"><svg class="ic"><use href="#i-rpt"/></svg>旋转点</span><i class="tsep"></i>
        <span class="tbtn"><svg class="ic"><use href="#i-smart"/></svg>智能布置<i class="dn dn-tight"></i></span><i class="tsep"></i>
        <span class="tbtn"><svg class="ic"><use href="#i-orig"/></svg>原位标注</span>
        <span class="tbtn"><svg class="ic"><use href="#i-tbl"/></svg>图元柱表</span>
        <span class="tbtn"><svg class="ic"><use href="#i-adj"/></svg>调整柱端头</span>
        <span class="tbtn"><svg class="ic"><use href="#i-wall"/></svg>按墙位置绘制柱<i class="dn"></i></span>
        <span class="tbtn"><svg class="ic"><use href="#i-chk"/></svg>查改标注<i class="dn"></i></span>
        <span class="tbtn"><svg class="ic"><use href="#i-auto"/></svg>自动生成构造柱</span>
      </div>
    </div>

    <!-- 3d view -->
    <svg class="canvas-3d" viewBox="170 192 1196 281">
      <defs><linearGradient id="ringFade" x1="0" x2="1" y1="0" y2="0"><stop offset="0" stop-color="#d4d4d4"/><stop offset=".6" stop-color="#8a8a8a"/><stop offset="1" stop-color="#707070"/></linearGradient></defs>
      <g stroke="#f00" stroke-width="1.200" fill="none">
        <path d="M222 212L403 237M208 253L418 283M170 309L440 347M182 273L170 309M412 266L347 473M477 375L446 473M576 375L545 473M766 287L1366 370M781 333L1366 414M797 397L1343 473"/>
      </g>
      <polygon points="170,192 173,192 200,275 170,271" fill="#5b00a8"/>
      <polygon points="173,192 227,192 201,276" fill="#4b008c"/>
      <polygon points="468,192 723,192 793,405 528,368" fill="#868686"/>
      <polygon points="723,192 733,192 799,387 793,405" fill="#6c6c6c"/>
      <polygon points="460,192 468,192 528,368 525,381" fill="#480088"/>
      <polygon points="388,192 460,192 525,381 448,371" fill="#5b00a8"/>
      <polygon points="505,192 515,192 503,228 494,228" fill="#0070e0"/>
      <polygon points="494,228 503,228 549,363 539,363" fill="#005cb8"/>
      <polygon points="515,192 562,323 549,363 503,228" fill="#004c98"/>
      <path d="M863 192L773 473" stroke="#f00" stroke-width="1.200"/>
      <g fill="none" stroke="url(#ringFade)"><circle cx="767" cy="332" r="125"/></g>
      <g fill="none" stroke="#8a8a8a">
        <circle cx="767" cy="207" r="8"/><path d="M759 207h16"/>
        <circle cx="767" cy="457" r="8"/><path d="M759 457h16"/>
        <circle cx="892" cy="332" r="8"/><path d="M892 324v16"/>
      </g>
      <g fill="none" stroke="#bdbdbd"><circle cx="643" cy="332" r="8"/><path d="M643 324v16"/></g>
      <polygon points="858,192 864,193 869,198 870,205 867,212 861,217 855,217 849,212 846,205 847,198 852,193" fill="none" stroke="#0a8a0a"/>
      <text x="858" y="210" fill="#ccc" font-size="14" font-weight="700" text-anchor="middle" font-family="Liberation Sans, sans-serif">4</text>
      <path d="M226 423L215 400" stroke="#0078f0" stroke-width="4"/>
      <circle cx="217" cy="401" r="3" fill="#0078f0"/>
      <path d="M226 423L235 392" stroke="#10e010" stroke-width="4"/>
      <polygon points="232,392 239,382 239,394" fill="#10e010"/>
      <path d="M226 423L264 427" stroke="#f00" stroke-width="4"/>
      <polygon points="259,423 272,429 259,432" fill="#f00"/>
      <text x="202" y="400" fill="#0a78f0" font-size="13" font-family="Liberation Sans, sans-serif">Z</text>
      <text x="243" y="395" fill="#10e010" font-size="13" font-family="Liberation Sans, sans-serif">Y</text>
      <text x="263" y="420" fill="#f00" font-size="13" font-family="Liberation Sans, sans-serif">X</text>
    </svg>

    <!-- snap toolbar -->
    <div class="tbar-row r-snap">
      <div class="tblock b-s1">
        <i class="grip"></i>
        <span class="tbtn px-1"><svg class="ic"><use href="#i-sx"/></svg>交点</span>
        <span class="tbtn on"><svg class="ic"><use href="#i-sp"/></svg>垂点</span>
        <span class="tbtn on"><svg class="ic"><use href="#i-sm"/></svg>中点</span>
        <span class="tbtn"><svg class="ic"><use href="#i-sv"/></svg>顶点</span>
        <span class="tbtn"><svg class="ic"><use href="#i-sc"/></svg>坐标</span>
      </div>
      <div class="tblock b-s2">
        <i class="grip"></i>
        <div class="combo w-off">不偏移<i class="dn"></i></div>
        <i class="tsep"></i><span class="mute x-lbl">X=</span>
        <div class="spin spin-a">0<i>▲<br>▼</i></div><span class="mute mm-a">mm</span><span class="mute y-lbl">Y=</span>
        <div class="spin spin-a">0<i>▲<br>▼</i></div><span class="mute mm-b">mm</span>
        <i class="tsep sep-s"></i><i class="chk-box"></i><span class="rot-lbl">旋转</span>
        <div class="spin spin-b">0.000<i>▲<br>▼</i></div><span class="mute ms-1">°</span>
      </div>
    </div>

    <!-- rebar grid -->
    <div class="rebar-pane d-flex">
      <div class="side-strip">
        <svg class="d-block" width="12" height="11"><rect x=".5" y=".5" width="10" height="10" fill="#ddd" stroke="#777"/><path d="M2 2l7 7M9 2l-7 7" stroke="#a02020"/></svg>
        <div class="dots"></div>
      </div>
      <div class="rebar-body d-flex flex-column">
        <div class="rebar-tools d-flex align-items-center">
          <span class="tbtn off"><svg class="ic"><path d="M3 3v10" stroke="#bbb" stroke-width="2"/><path d="M13 3v10L6 8z" fill="#ccc"/></svg></span>
          <span class="tbtn off"><svg class="ic"><path d="M12 3v10L5 8z" fill="#ccc"/></svg></span>
          <span class="tbtn off"><svg class="ic"><path d="M4 3v10l7-5z" fill="#ccc"/></svg></span>
          <span class="tbtn off"><svg class="ic"><path d="M13 3v10" stroke="#bbb" stroke-width="2"/><path d="M3 3v10l7-5z" fill="#ccc"/></svg></span>
          <i class="tsep"></i>
          <span class="tbtn off nudge"><svg class="ic"><path d="M8 3l5 5h-3v5H6V8H3z" fill="#ccc"/></svg></span>
          <span class="tbtn off"><svg class="ic"><path d="M8 13l5-5h-3V3H6v5H3z" fill="#ccc"/></svg></span>
          <i class="tsep"></i>
          <span class="tbtn off"><svg class="ic"><use href="#i-ins"/></svg>插入</span>
          <span class="tbtn off"><svg class="ic"><use href="#i-rem"/></svg>删除</span>
          <span class="tbtn off"><svg class="ic"><use href="#i-scale"/></svg>缩尺配筋</span>
          <span class="tbtn off"><svg class="ic"><use href="#i-info"/></svg>钢筋信息</span>
          <span class="tbtn"><svg class="ic"><use href="#i-lib"/></svg>钢筋图库</span>
          <span class="tbtn"><svg class="ic"><use href="#i-oth"/></svg>其他<i class="dn dn-tight"></i></span>
          <span class="tbtn">关闭</span>
          <i class="tsep"></i>
          <span class="tbtn tbtn-sum">单构件钢筋总重(kg)： 0</span>
        </div>
        <div class="rebar-grid">
          <table class="table grid-tbl">
            <colgroup>
              <col class="c1"><col class="c2"><col class="c3"><col class="c4"><col class="c5"><col class="c6"><col class="c7"><col class="c8"><col class="c9"><col class="c10"><col class="c11"><col class="c12"><col class="c13"><col class="c14"><col class="c15"><col class="c16">
            </colgroup>
            <thead>
              <tr>
                <th></th><th>筋号</th><th class="act-h">直径<span class="lat">(mm)</span></th><th>级别</th><th>图号</th><th>图形</th><th>计算公式</th><th>公式描述</th><th>长度<span class="lat">(mm)</span></th><th>根数</th><th>搭接</th><th>损耗<span class="lat">(%)</span></th><th>单重<span class="lat">(kg)</span></th><th>总重<span class="lat">(kg)</span></th><th>钢筋归类</th><th class="clip">搭接形</th>
              </tr>
            </thead>
            <tbody>
              <tr><td class="act-r">1*</td><td></td><td class="act-c"></td><td></td><td></td><td></td><td></td><td></td><td></td><td></td><td></td><td></td><td></td><td></td><td></td><td></td></tr>
            </tbody>
          </table>
        </div>
        <div class="hbar d-flex">
          <div class="hbar-arrow">‹</div><div class="hbar-thumb"></div><div class="hbar-end">›</div>
        </div>
      </div>
    </div>
  </div>
</div>

<!-- status bar -->
<div class="status-bar d-flex">
  <div class="st st-xy st-sm">X=76884 Y=7491</div>
  <div class="st st-h">层高:<span class="lat">4.5m</span></div>
  <div class="st st-b">底标高:<span class="lat">4.45m</span></div>
  <div class="st st-n st-sm">1(1)</div>
  <div class="st st-fill"></div>
  <div class="st st-fps st-sm">615.2 FPS</div>
</div>

<!-- windows taskbar -->
<div class="task-bar d-flex align-items-center">
  <div class="start-cell d-flex align-items-center">
    <svg width="17" height="17"><path d="M0 2.500l7-1v6.500H0zM8 1.300l9-1.300v8H8zM0 9h7v6.500l-7-1zM8 9h9v8l-9-1.300z" fill="#fff"/></svg>
  </div>
  <div class="search-cell d-flex align-items-center">
    <svg width="22" height="22"><circle cx="11" cy="11" r="8.500" fill="none" stroke="#111" stroke-width="3"/></svg>
    <span>在这里输入你要搜索的内容</span>
    <svg class="ms-auto me-2" width="16" height="18"><rect x="5" y="1" width="6" height="10" rx="3" fill="none" stroke="#333"/><path d="M2 8a6 6 0 0 0 12 0M8 14v3M5 17h6" fill="none" stroke="#333"/></svg>
  </div>
  <div class="task-ic ml2"><svg viewBox="0 0 26 26"><path d="M6 5h12M6 21h12M6 9h12v8H6zM21 9v1M21 13v1M21 16v1" stroke="#fff" fill="none"/></svg></div>
  <div class="task-ic ml6"><svg viewBox="0 0 26 26"><path d="M13 12C8 12 3 10 3 6s4-4 6-4 4 4 4 10zM14 12c0-5 2-10 6-10s4 4 4 6-4 4-10 4zM14 14c5 0 10 2 10 6s-4 4-6 4-4-4-4-10zM12 14c0 5-2 10-6 10s-4-4-4-6 4-4 10-4z" fill="#eee"/></svg></div>
  <div class="task-ic ml8"><svg viewBox="0 0 26 26"><text x="13" y="21" fill="#eee" font-size="26" font-weight="700" text-anchor="middle" font-family="Liberation Sans, sans-serif">e</text><path d="M4 24C2 16 12 4 23 2" stroke="#eee" fill="none"/></svg></div>
  <div class="task-ic ml6"><svg viewBox="0 0 26 26"><path d="M21 6A10 10 0 1 0 23 15M21 6H12a6 6 0 1 0 6 8h-6" fill="none" stroke="#bbb" stroke-width="1.500"/></svg></div>
  <i class="task-sep ml10"></i>
  <div class="task-ic ml16"><svg viewBox="0 0 26 26"><text x="13" y="22" fill="#1f8fe8" font-size="32" font-weight="700" text-anchor="middle" font-family="Liberation Sans, sans-serif">e</text></svg></div>
  <div class="task-ic ml-n2"><svg viewBox="0 0 26 26"><text x="13" y="22" fill="#2aa0e8" font-size="30" font-weight="700" text-anchor="middle" font-family="Liberation Sans, sans-serif">e</text><path d="M3 22C6 12 14 4 24 3" stroke="#f0c020" stroke-width="2" fill="none"/></svg></div>
  <div class="task-ic"><svg viewBox="0 0 26 26"><path d="M3 4h8l2 3h10v17H3z" fill="#f7d774"/><rect x="8" y="15" width="10" height="9" fill="#2e9be0"/></svg></div>
  <div class="task-ic used"><svg viewBox="0 0 26 26"><ellipse cx="13" cy="13" rx="11" ry="12" fill="#5fc43f" stroke="#dfe"/><text x="13" y="20" fill="#fff" font-size="20" font-weight="700" text-anchor="middle" font-family="Liberation Sans, sans-serif">e</text></svg></div>
  <div class="task-ic"><svg viewBox="0 0 26 26"><path d="M1 9L13 1l12 8v15H1z" fill="#fff"/><path d="M1 9l12 8 12-8" fill="#0a1b22" stroke="#0a1b22"/></svg></div>
  <div class="task-ic used"><svg viewBox="0 0 26 26"><path d="M20 3C10 1 3 7 3 15s7 10 12 8 7-8 3-11c-3-2-6 0-6 2" fill="none" stroke="#1f8fe8" stroke-width="5"/></svg></div>
  <div class="task-ic now"><svg viewBox="0 0 26 26"><rect x="1" y="1" width="24" height="24" rx="4" fill="#1b97ee"/><path d="M13 5v16M6 13h14M6 13a3 3 0 0 1 4-3M20 13a3 3 0 0 1-4 3" stroke="#fff" stroke-width="2" fill="none"/></svg></div>
  <i class="task-sep ml15"></i>
  <span class="tray tray-link ml11">链接</span>
  <svg class="ml23" width="16" height="16"><circle cx="6" cy="6" r="3" fill="none" stroke="#ddd"/><circle cx="12" cy="4" r="2.500" fill="none" stroke="#ddd"/><path d="M1 15c0-5 9-5 9 0" fill="none" stroke="#ddd"/></svg>
  <svg class="ml20" width="14" height="10"><path d="M1 8l6-6 6 6" fill="none" stroke="#eee" stroke-width="1.300"/></svg>
  <svg class="ic text-white ml10"><use href="#i-bell"/></svg>
  <svg class="ml7" width="18" height="14"><rect x="3" y="3" width="13" height="9" fill="none" stroke="#eee"/><path d="M3 1h3v5H3z" fill="#0a1b22" stroke="#eee"/><path d="M17 6v3" stroke="#eee"/></svg>
  <svg class="ml9" width="16" height="16"><path d="M1 14a13 13 0 0 1 13-13M4 14a10 10 0 0 1 10-10M7 14a7 7 0 0 1 7-7" fill="none" stroke="#889"/><circle cx="3" cy="14" r="1.400" fill="#eee"/></svg>
  <svg class="ml5" width="16" height="16"><path d="M1 6h3l4-4v12l-4-4H1zM10 5a4 4 0 0 1 0 6M12 3a7 7 0 0 1 0 10" fill="none" stroke="#eee"/></svg>
  <svg class="ml8" width="24" height="16"><rect x=".5" y=".5" width="23" height="15" fill="none" stroke="#eee"/><path d="M3 4h18M3 7h18M3 10h18" stroke="#eee" stroke-dasharray="1 1"/><path d="M6 13h12" stroke="#eee"/></svg>
  <span class="tray ml11">中</span>
  <svg class="ml12" width="20" height="18"><path d="M2 3l14-2 2 14-14 2z" fill="#ee4a1a"/><path d="M13 5H7v3h5v4H6" fill="none" stroke="#fff" stroke-width="2"/></svg>
  <div class="clock ml9">11:09<br>2018/9/8</div>
  <div class="note-wrap position-relative">
    <svg class="d-block" width="20" height="20"><path d="M1 2h16v12H8l-3 3v-3H1z" fill="#fff"/><path d="M4 5h10M4 8h10M4 11h7" stroke="#0a1b22"/></svg>
    <span class="note-badge position-absolute rounded-circle text-center">3</span>
  </div>
</div>

</body>
</html>
